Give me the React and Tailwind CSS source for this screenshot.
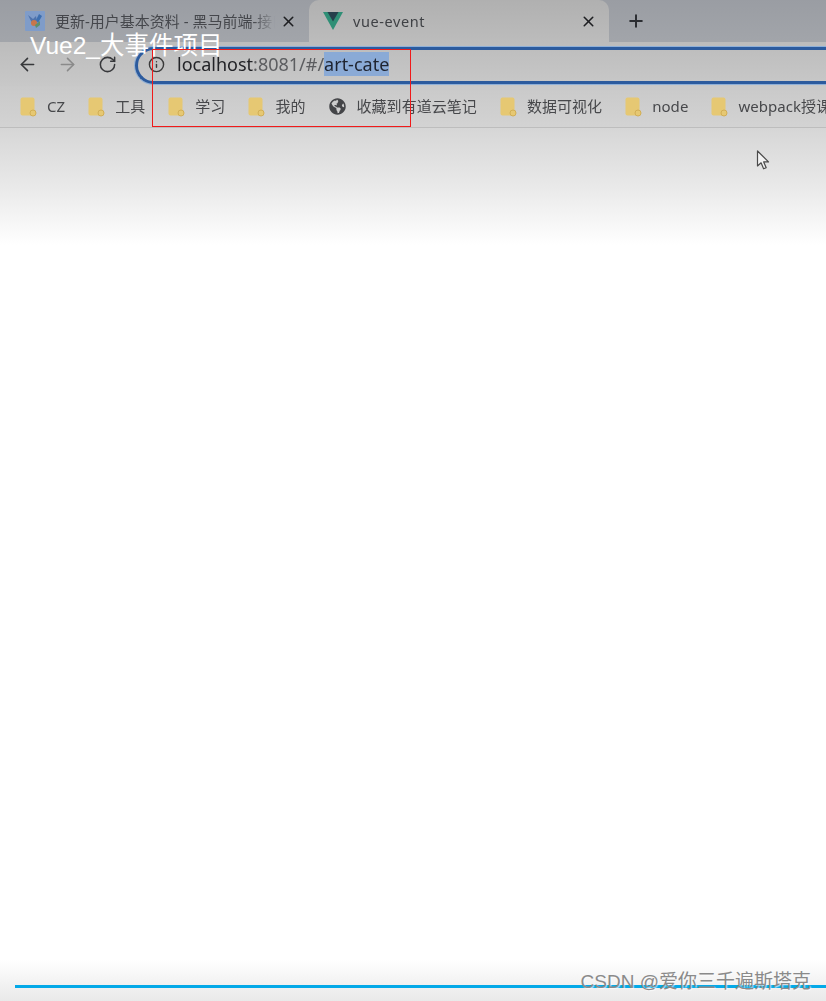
import { ArrowLeft, ArrowRight, Info, Plus, RotateCw, X } from 'lucide-react';
import { FaGlobeAmericas } from 'react-icons/fa';

const BOOKMARKS_BEFORE = ['CZ', '工具', '学习', '我的'];
const BOOKMARKS_AFTER = ['数据可视化', 'node', 'webpack授课'];

function FolderIcon() {
    return (
        <svg width="17" height="20" viewBox="0 0 17 20" className="shrink-0">
            <rect x="0.5" y="0.5" width="14" height="18" rx="2" fill="#e6c873" />
            <circle cx="13" cy="16" r="3" fill="#e6c873" stroke="#d2ae55" strokeWidth="1" />
        </svg>
    );
}

function Bookmark({ label }) {
    return (
        <div className="flex shrink-0 items-center gap-[10px]">
            <FolderIcon />
            <span>{label}</span>
        </div>
    );
}

function TabFavicon() {
    return (
        <svg width="20" height="20" viewBox="0 0 20 20" className="shrink-0">
            <rect width="20" height="20" rx="1" fill="#7f9cc9" />
            <path d="M3 4l5 4 3-3 1 6-4 3z" fill="#4f73ad" />
            <path d="M14 3l3 2-4 7-2-3z" fill="#3d6fb0" />
            <circle cx="9" cy="12" r="3" fill="#c9764a" />
            <path d="M10 14l5-4 0 4-4 3z" fill="#5f8f6b" />
        </svg>
    );
}

function VueLogo() {
    return (
        <svg width="20" height="18" viewBox="0 0 20 18" className="shrink-0">
            <path d="M0 0h20L10 18z" fill="#2f8f76" />
            <path d="M4.5 0h11L10 9.5z" fill="#263f4c" />
        </svg>
    );
}

function CursorIcon() {
    return (
        <svg width="15" height="21" viewBox="0 0 15 21">
            <path
                d="M1.5 1v15l3.6-3.2 2.5 6 2.6-1.1-2.5-5.8h4.8z"
                fill="#f2f2f2"
                stroke="#4a4a4a"
                strokeWidth="1.2"
                strokeLinejoin="round"
            />
        </svg>
    );
}

export default function App() {
    return (
        <div className="relative h-[1001px] w-[826px] overflow-hidden bg-white font-['Noto_Sans','Noto_Sans_CJK_SC',sans-serif]">
            <div className="blur-[0.5px]">
                {/* tab strip */}
                <div className="flex h-[42px] items-end bg-gradient-to-b from-[#9a9da3] to-[#a2a5aa]">
                    <div className="flex h-[42px] w-[309px] shrink-0 items-center pl-[25px] pr-[12px]">
                        <TabFavicon />
                        <span className="ml-[10px] w-[220px] overflow-hidden whitespace-nowrap text-[15px] text-[#45474c] [mask-image:linear-gradient(to_right,black_90%,transparent)]">
                            更新-用户基本资料 - 黑马前端-接口文档
                        </span>
                        <X size={17} strokeWidth={2.2} className="ml-auto text-[#1e1f22]" />
                    </div>
                    <div className="flex h-[42px] w-[300px] shrink-0 items-center rounded-t-[10px] bg-gradient-to-b from-[#b0b0b0] to-[#bcbcbc] pl-[14px] pr-[12px]">
                        <VueLogo />
                        <span className="ml-[10px] mt-[2px] text-[14.5px] tracking-[0.6px] text-[#3f4145]">vue-event</span>
                        <X size={17} strokeWidth={2.2} className="ml-auto text-[#1e1f22]" />
                    </div>
                    <Plus size={20} strokeWidth={2.4} className="mb-[11px] ml-[17px] text-[#2c2e33]" />
                </div>

                {/* toolbar */}
                <div className="flex h-[44px] items-center bg-gradient-to-b from-[#bcbcbc] to-[#c8c8c8] pl-[17px]">
                    <ArrowLeft size={21} strokeWidth={1.8} className="shrink-0 text-[#37383b]" />
                    <ArrowRight size={21} strokeWidth={1.8} className="ml-[19px] shrink-0 text-[#8a8a8a]" />
                    <RotateCw size={19} strokeWidth={1.9} className="ml-[20px] shrink-0 text-[#37383b]" />
                    <div className="ml-[18px] mt-[3px] flex h-[37px] min-w-0 flex-1 items-center rounded-l-full border-y-[3px] border-l-[3px] border-r-0 border-[#2c5b9e] pl-[10px] shadow-[0_0_0_1px_#8fb0d8]">
                        <Info size={17} strokeWidth={2} className="mb-[2px] shrink-0 text-[#3a3a3a]" />
                        <div className="mb-[3px] ml-[12px] flex items-center whitespace-nowrap text-[18px] leading-[24px]">
                            <span className="text-[#222327]">localhost</span>
                            <span className="text-[#5c5d60]">:8081/#/</span>
                            <span className="bg-[#8aaad6] text-[#1f2430]">art-cate</span>
                        </div>
                    </div>
                </div>

                {/* bookmarks */}
                <div className="flex h-[42px] items-center gap-[23px] overflow-hidden whitespace-nowrap border-b border-b-[#bdbdbd] bg-gradient-to-b from-[#c9c9c9] to-[#d3d3d3] pl-[20px] text-[15px] tracking-[0.05px] text-[#47484b]">
                    {BOOKMARKS_BEFORE.map((label) => (
                        <Bookmark key={label} label={label} />
                    ))}
                    <div className="flex shrink-0 items-center gap-[11px]">
                        <FaGlobeAmericas size={17} className="text-[#444548]" />
                        <span>收藏到有道云笔记</span>
                    </div>
                    {BOOKMARKS_AFTER.map((label) => (
                        <Bookmark key={label} label={label} />
                    ))}
                </div>
            </div>

            {/* page content: just the fade of the video frame */}
            <div className="h-[117px] bg-gradient-to-b from-[#d6d6d6] via-[#e9e9e9] to-white" />

            {/* video frame overlays */}
            <div className="absolute left-[756px] top-[150px]">
                <CursorIcon />
            </div>
            <div className="absolute left-[30px] top-[29px] text-[24.5px] leading-[33px] text-white font-['Liberation_Sans','Noto_Sans_CJK_SC',sans-serif]">
                Vue2_大事件项目
            </div>
            <div className="absolute left-[152px] top-[49px] h-[78px] w-[259px] border border-[#f01a1a]" />

            <div className="absolute inset-x-0 bottom-0 h-[41px] bg-gradient-to-b from-white to-[#e9e9e9]" />
            <div className="absolute bottom-[13px] left-[15px] right-0 h-[3px] bg-[#04a9e8]" />
            <div className="absolute bottom-[6px] right-[15px] text-[19px] leading-[26px] text-[#8a8a8a] [text-shadow:1px_1px_1px_rgba(255,255,255,0.7)] font-['Liberation_Sans','Noto_Sans_CJK_SC',sans-serif]">
                CSDN @爱你三千遍斯塔克
            </div>
        </div>
    );
}
